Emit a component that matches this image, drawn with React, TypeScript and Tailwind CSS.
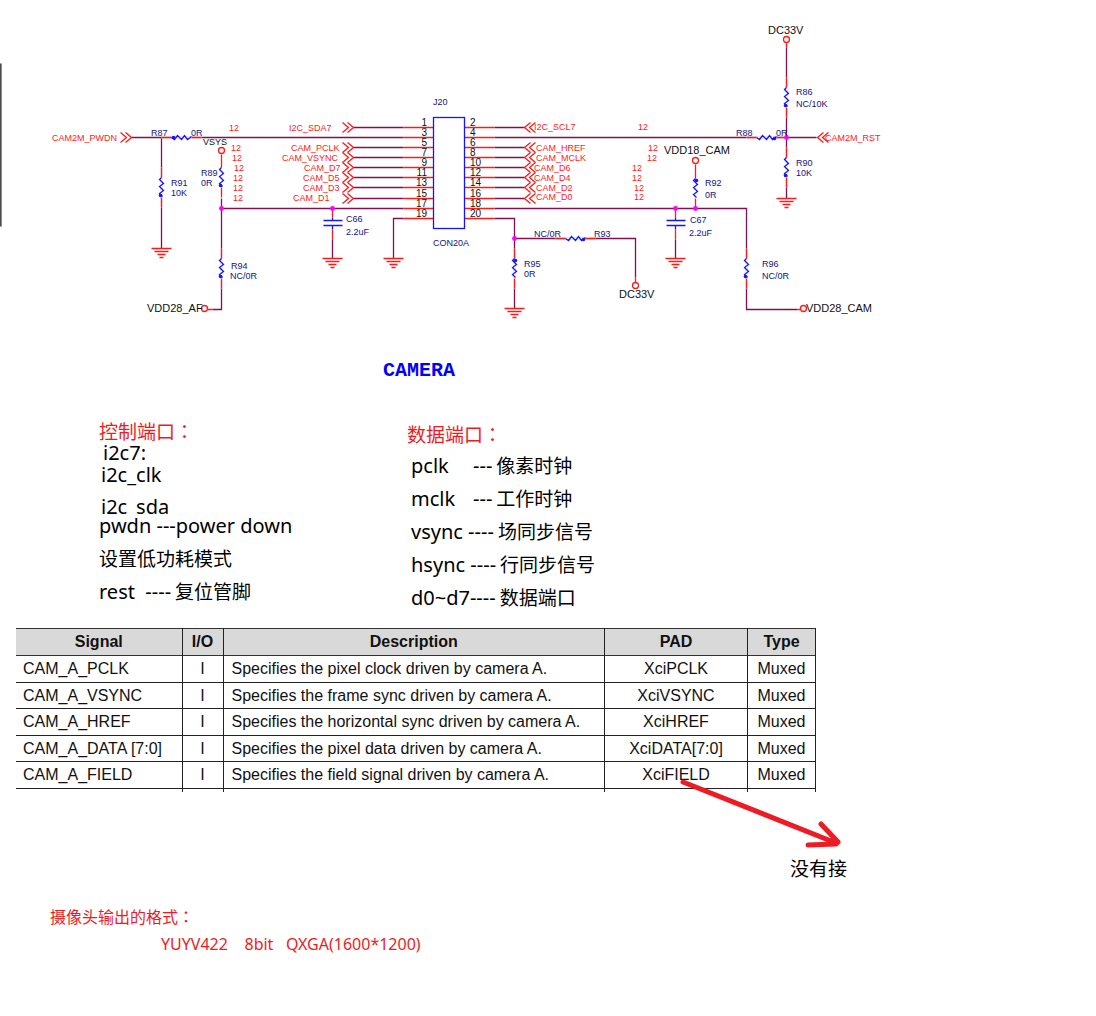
import React from "react";

const WIRE = "#80104f";
const RED = "#ff1a1a";
const BLUE = "#1414ff";
const NAVY = "#14147d";

type Point = [number, number];

function Line({ points, color = WIRE }: { points: Point[]; color?: string }) {
  return <polyline points={points.map((p) => p.join(",")).join(" ")} fill="none" stroke={color} />;
}

function Label({ x, y, text, color = NAVY, size = 9 }: { x: number; y: number; text: string; color?: string; size?: number }) {
  return (
    <text x={x} y={y} fill={color} fontSize={size}>
      {text}
    </text>
  );
}

/* A resistor drawn downwards, twenty units long, with ten-unit leads. */
function Resistor({ x, y, lead = 10, dotAtTop = false }: { x: number; y: number; lead?: number; dotAtTop?: boolean }) {
  return (
    <g transform={`translate(${x} ${y})`} fill="none">
      <path d={`M0 ${-lead}V0M0 20V30`} stroke={RED} />
      <path d="M0 0L-2 2L2 6L-2 9L2 13L-2 16L1 19" stroke={BLUE} />
      <circle cx={dotAtTop ? 1 : -1} cy={dotAtTop ? 2 : 18} r="1.8" fill={BLUE} />
    </g>
  );
}

function Ground({ x, y }: { x: number; y: number }) {
  return <path d={`M${x - 10} ${y}h20M${x - 7} ${y + 3}h14M${x - 4} ${y + 6}h8M${x - 2} ${y + 9}h4`} stroke={RED} />;
}

function Capacitor({ x }: { x: number }) {
  return (
    <g>
      <path d={`M${x} 239V258`} stroke={WIRE} />
      <path d={`M${x} 208V217M${x} 229V239`} stroke={RED} />
      <path d={`M${x} 217V220M${x} 225V229M${x - 9} 220h19M${x - 9} 225h19`} stroke={BLUE} />
      <Ground x={x} y={258} />
    </g>
  );
}

function Terminal({ x, y }: { x: number; y: number }) {
  return <circle cx={x} cy={y} r="3" fill="#fff" stroke={RED} />;
}

function Junction({ x, y }: { x: number; y: number }) {
  return <circle cx={x} cy={y} r="2.4" fill="#ff00ff" />;
}

function Chevrons({ x, y, left = false }: { x: number; y: number; left?: boolean }) {
  const d = left
    ? `M${x + 6} ${y - 5}L${x} ${y}L${x + 6} ${y + 5}M${x + 11} ${y - 5}L${x + 5} ${y}L${x + 11} ${y + 5}`
    : `M${x - 6} ${y - 5}L${x} ${y}L${x - 6} ${y + 5}M${x - 11} ${y - 5}L${x - 5} ${y}L${x - 11} ${y + 5}`;
  return <path d={d} fill="none" stroke={RED} />;
}

const pinRows = [127, 137, 147, 157, 167, 177, 187, 198, 208, 218];
const busRows = [0, 2, 3, 4, 5, 6, 7];

const signals: [number, number, string][] = [
  [52, 141, "CAM2M_PWDN"],
  [825, 141, "CAM2M_RST"],
  [289, 131, "I2C_SDA7"],
  [291, 151, "CAM_PCLK"],
  [282, 161, "CAM_VSYNC"],
  [304, 171, "CAM_D7"],
  [303, 181, "CAM_D5"],
  [303, 191, "CAM_D3"],
  [293, 201, "CAM_D1"],
  [534, 130, "I2C_SCL7"],
  [536, 151, "CAM_HREF"],
  [536, 161, "CAM_MCLK"],
  [534, 171, "CAM_D6"],
  [534, 181, "CAM_D4"],
  [536, 191, "CAM_D2"],
  [536, 200, "CAM_D0"],
  [229, 131, "12"],
  [231, 151, "12"],
  [232, 161, "12"],
  [234, 171, "12"],
  [233, 181, "12"],
  [233, 191, "12"],
  [233, 201, "12"],
  [638, 130, "12"],
  [648, 151, "12"],
  [647, 161, "12"],
  [632, 171, "12"],
  [632, 181, "12"],
  [634, 191, "12"],
  [634, 200, "12"],
];

const parts: [number, number, string][] = [
  [433, 105, "J20"],
  [433, 246, "CON20A"],
  [151, 136, "R87"],
  [191, 136, "0R"],
  [171, 186, "R91"],
  [171, 196, "10K"],
  [201, 176, "R89"],
  [201, 186, "0R"],
  [231, 269, "R94"],
  [230, 279, "NC/0R"],
  [346, 222, "C66"],
  [346, 235, "2.2uF"],
  [534, 237, "NC/0R"],
  [594, 237, "R93"],
  [524, 267, "R95"],
  [524, 277, "0R"],
  [690, 223, "C67"],
  [689, 236, "2.2uF"],
  [705, 186, "R92"],
  [705, 198, "0R"],
  [762, 267, "R96"],
  [762, 279, "NC/0R"],
  [736, 136, "R88"],
  [776, 136, "0R"],
  [796, 95, "R86"],
  [796, 107, "NC/10K"],
  [796, 166, "R90"],
  [796, 176, "10K"],
];

const horizontalResistors = [
  { x: 171, y: 137, dotX: 2, dotY: 0 },
  { x: 565, y: 238, dotX: 18, dotY: 1 },
  { x: 756, y: 137, dotX: 18, dotY: 1 },
];

function Schematic() {
  return (
    <svg
      viewBox="0 0 900 330"
      className="block w-full max-w-[900px]"
      role="img"
      aria-label="Camera connector schematic"
      fontFamily='"Liberation Sans", Arial, sans-serif'
    >
      <g transform="translate(0.5 0.5)" strokeWidth="1.3">
        <path d="M0 63V226" stroke="#4a4a4a" />
        <path d="M1 63V226" stroke="#8a8a8a" strokeWidth="1" />

        <Line points={[[131, 137], [403, 137]]} />
        <Line points={[[161, 137], [161, 248]]} />
        <Line points={[[221, 198], [221, 309], [212, 309]]} />
        <Line points={[[221, 208], [403, 208]]} />
        <Line points={[[403, 218], [393, 218], [393, 258]]} />
        <Line points={[[494, 137], [816, 137]]} />
        <Line points={[[494, 208], [746, 208], [746, 309], [797, 309]]} />
        <Line points={[[494, 218], [514, 218], [514, 308]]} />
        <Line points={[[514, 238], [635, 238], [635, 277]]} />
        <Line points={[[786, 43], [786, 198]]} />

        {pinRows.map((y) => (
          <path key={y} d={`M403 ${y}H433M464 ${y}H494`} stroke={RED} />
        ))}
        {busRows.map((row) => (
          <g key={row}>
            <path d={`M353 ${pinRows[row]}H403M494 ${pinRows[row]}H524`} stroke={WIRE} />
            <Chevrons x={353} y={pinRows[row]} />
            <Chevrons x={524} y={pinRows[row]} left />
          </g>
        ))}
        <Chevrons x={131} y={137} />
        <Chevrons x={817} y={137} left />
        <rect x="433" y="117" width="31" height="111" fill="#fff" stroke={BLUE} />

        {horizontalResistors.map(({ x, y, dotX, dotY }) => (
          <g key={x} transform={`translate(${x} ${y})`} fill="none">
            <path d="M-10 0H30" stroke="#fff" strokeWidth="2" />
            <path d="M-10 0H0M20 0H30" stroke={RED} />
            <path d="M0 0L3 2L6 -2L10 2L13 -2L16 2L20 -1" stroke={BLUE} />
            <circle cx={dotX} cy={dotY} r="1.8" fill={BLUE} />
          </g>
        ))}

        <path
          d="M161 167V207M221 248V288M514 248V288M746 248V288M786 77V117M786 147V187M786 43V47"
          stroke="#fff"
          strokeWidth="2"
        />
        <Resistor x={161} y={177} />
        <Resistor x={221} y={167} lead={13} />
        <Resistor x={221} y={258} />
        <Resistor x={514} y={258} dotAtTop />
        <Resistor x={746} y={258} />
        <Resistor x={786} y={87} />
        <Resistor x={786} y={157} />
        <Resistor x={695} y={178} lead={14} dotAtTop />
        <path d="M786 43V47M635 277V282M207 309H212M797 309H800" stroke={RED} />

        <Capacitor x={332} />
        <Capacitor x={675} />
        <Ground x={161} y={248} />
        <Ground x={393} y={258} />
        <Ground x={514} y={308} />
        <Ground x={786} y={198} />

        <Terminal x={221} y={150} />
        <Terminal x={204} y={308} />
        <Terminal x={635} y={285} />
        <Terminal x={695} y={160} />
        <Terminal x={786} y={39} />
        <Terminal x={803} y={308} />

        <Junction x={221} y={208} />
        <Junction x={332} y={208} />
        <Junction x={514} y={238} />
        <Junction x={675} y={208} />
        <Junction x={695} y={208} />
        <Junction x={786} y={137} />
      </g>

      {pinRows.map((y, i) => (
        <g key={y} fill="#111" fontSize="10">
          <text x="427" y={y - 1} textAnchor="end">
            {i * 2 + 1}
          </text>
          <text x="470" y={y - 1}>
            {i * 2 + 2}
          </text>
        </g>
      ))}
      {signals.map(([x, y, text]) => (
        <Label key={`${x}-${y}`} x={x} y={y} text={text} color={RED} />
      ))}
      {parts.map(([x, y, text]) => (
        <Label key={`${x}-${y}`} x={x} y={y} text={text} />
      ))}
      <Label x={203} y={145} text="VSYS" color="#111" />
      <Label x={147} y={312} text="VDD28_AF" color="#111" size={11} />
      <Label x={619} y={298} text="DC33V" color="#111" size={11} />
      <Label x={664} y={154} text="VDD18_CAM" color="#111" size={11} />
      <Label x={768} y={34} text="DC33V" color="#111" size={11} />
      <Label x={806} y={312} text="VDD28_CAM" color="#111" size={11} />
    </svg>
  );
}

/* The Traditional Chinese face centres the full-width colon in its cell. */
function Colon() {
  return (
    <span lang="zh-TW" className="font-['Noto_Sans_CJK_TC',sans-serif]">
      ：
    </span>
  );
}

const dataPorts = [
  { name: "pclk", nameClass: "inline-block w-[62px]", dashes: "---", text: "像素时钟" },
  { name: "mclk", nameClass: "inline-block w-[62px]", dashes: "---", text: "工作时钟" },
  { name: "vsync ", nameClass: "", dashes: "----", text: "场同步信号" },
  { name: "hsync ", nameClass: "", dashes: "----", text: "行同步信号" },
  { name: "d0~d7", nameClass: "", dashes: "----", text: "数据端口" },
];

const rows = [
  ["CAM_A_PCLK", "Specifies the pixel clock driven by camera A.", "XciPCLK"],
  ["CAM_A_VSYNC", "Specifies the frame sync driven by camera A.", "XciVSYNC"],
  ["CAM_A_HREF", "Specifies the horizontal sync driven by camera A.", "XciHREF"],
  ["CAM_A_DATA [7:0]", "Specifies the pixel data driven by camera A.", "XciDATA[7:0]"],
  ["CAM_A_FIELD", "Specifies the field signal driven by camera A.", "XciFIELD"],
];

function Notes() {
  return (
    <div className="flex pl-[99px] text-xl whitespace-pre text-black">
      <section className="w-[308px] pt-[3px] leading-[22px]">
        <h2 className="h-[22px] text-[19px] leading-[22px] text-[#ed1c24]">
          控制端口
          <Colon />
        </h2>
        <p className="pl-1">i2c7:</p>
        <p className="pl-[2px]">i2c_clk</p>
        <p className="mt-[10px] h-[19px] overflow-hidden pl-[2px]">i2c_sda</p>
        <p>pwdn ---power down</p>
        <p className="mt-[11px] text-[19px] leading-[22px]">设置低功耗模式</p>
        <p className="mt-[11px] h-[22px]">
          rest  ----<span className="pl-1 text-[19px] leading-[22px]">复位管脚</span>
        </p>
      </section>
      <section className="leading-[33px]">
        <h2 className="h-8 text-[19px] leading-[33px] text-[#ed1c24]">
          数据端口
          <Colon />
        </h2>
        <ul className="pl-1">
          {dataPorts.map(({ name, nameClass, dashes, text }) => (
            <li key={name} className="h-[33px]">
              <span className={nameClass}>{name}</span>
              {dashes}
              <span className="pl-1 text-[19px] leading-[33px]">{text}</span>
            </li>
          ))}
        </ul>
      </section>
    </div>
  );
}

function SignalTable() {
  return (
    <div className="relative mt-[14px] ml-4 max-w-[800px] font-['Liberation_Sans',Arial,sans-serif] text-base text-[#111]">
      <table className="w-full table-fixed border-collapse leading-5">
        <colgroup>
          <col className="w-[166px]" />
          <col className="w-[41px]" />
          <col />
          <col className="w-[143px]" />
          <col className="w-[68px]" />
        </colgroup>
        <thead>
          <tr className="h-[27px] border-y border-[#333] bg-[#d9d9d9]">
            {["Signal", "I/O", "Description", "PAD", "Type"].map((name) => (
              <th key={name} scope="col" className="border-r border-[#222] p-0 font-bold">
                {name}
              </th>
            ))}
          </tr>
        </thead>
        <tbody>
          {rows.map(([signal, description, pad]) => (
            <tr key={signal} className="h-[27px] border-b border-[#222] text-center even:h-[26px]">
              <td className="border-r border-[#222] p-0 pl-[7px] text-left">{signal}</td>
              <td className="border-r border-[#222] p-0">I</td>
              <td className="border-r border-[#222] p-0 pl-2 text-left">{description}</td>
              <td className="border-r border-[#222] p-0">{pad}</td>
              <td className="border-r border-[#222] p-0">Muxed</td>
            </tr>
          ))}
          <tr className="h-[3px]" aria-hidden="true">
            {rows.map(([signal]) => (
              <td key={signal} className="border-r border-[#222] p-0" />
            ))}
          </tr>
        </tbody>
      </table>
      <svg viewBox="0 0 166 76" className="absolute top-[149px] right-[-28px] w-[166px]" aria-hidden="true">
        <path d="M5 5L158 66M143 47L160 65L158 67L130 68" fill="none" stroke="#ed1c24" strokeWidth="5" strokeLinecap="round" strokeLinejoin="round" />
      </svg>
    </div>
  );
}

export default function App() {
  return (
    <main className="min-h-screen overflow-x-hidden bg-white font-['Noto_Sans','Noto_Sans_CJK_SC',sans-serif]">
      <Schematic />
      <h1 className="mt-7 pt-px pl-[383px] font-['Liberation_Mono',monospace] text-xl leading-6 font-bold text-[#0000ff]">CAMERA</h1>
      <div className="mt-[34px]">
        <Notes />
      </div>
      <SignalTable />
      <p className="mt-16 pl-[790px] text-[19px] leading-[26px] text-black">没有接</p>
      <footer className="mt-5 pl-[50px] text-base leading-7 whitespace-pre text-[#ed1c24]">
        <p className="h-7">
          摄像头输出的格式
          <Colon />
        </p>
        <p className="pl-[111px]">YUYV422    8bit   QXGA(1600*1200)</p>
      </footer>
    </main>
  );
}
